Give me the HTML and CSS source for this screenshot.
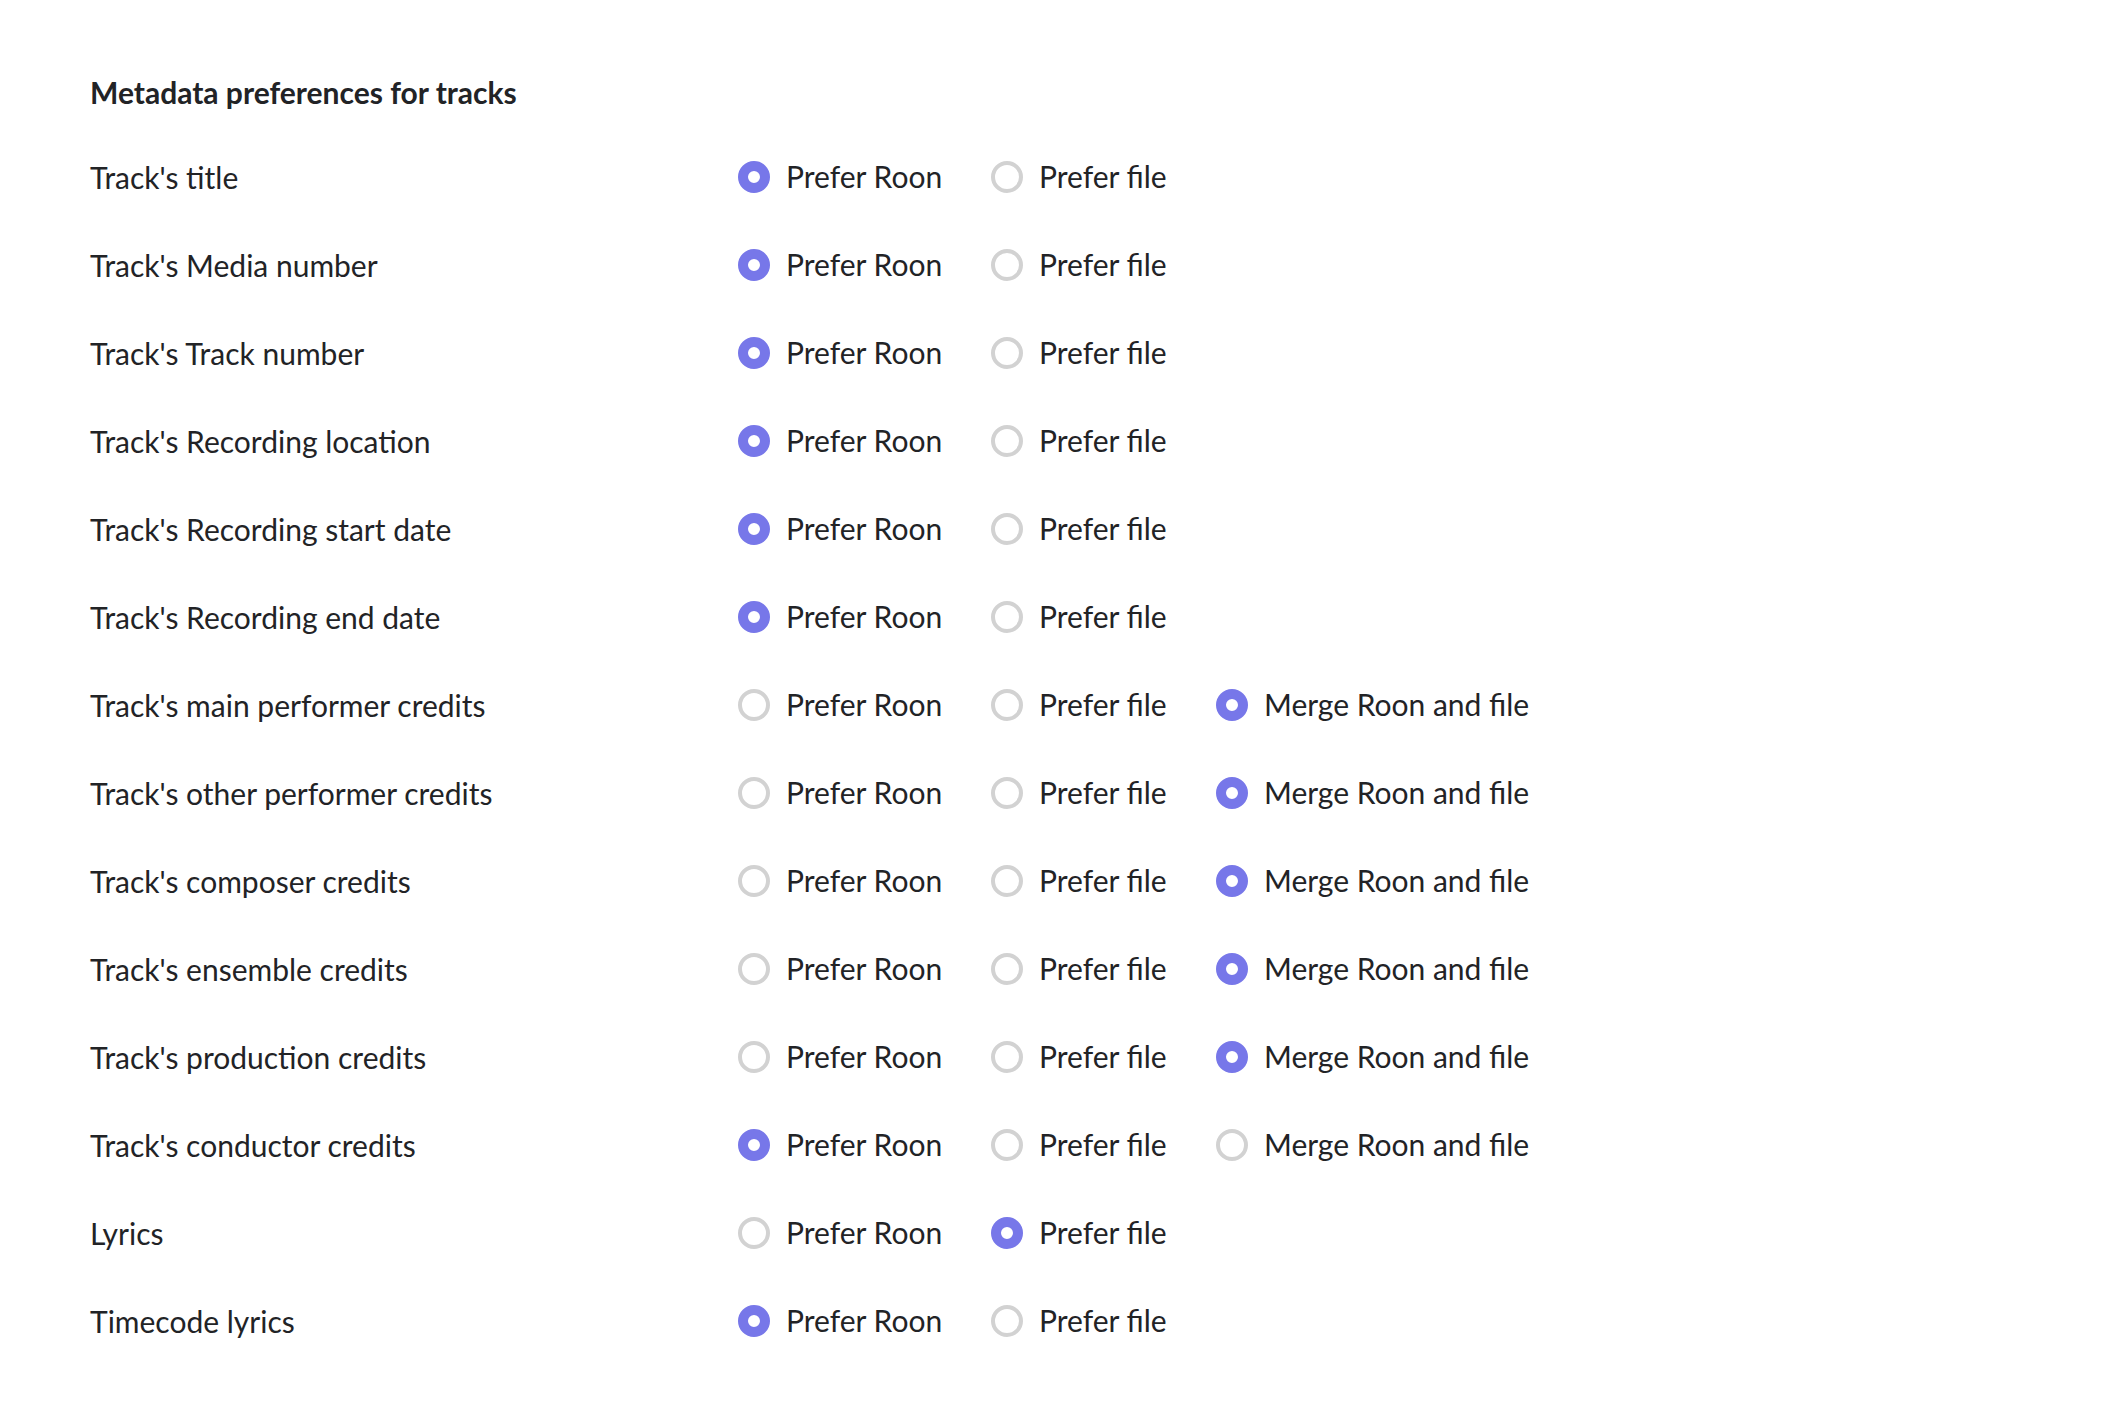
FILE: index.html
```html
<!DOCTYPE html>
<html lang="en">
<head>
<meta charset="utf-8">
<title>Metadata preferences for tracks</title>
<link rel="stylesheet" href="styles.css">
</head>
<body>
<main class="page">
  <h2 class="heading">Metadata preferences for tracks</h2>
  <div class="rows">
    <div class="row"><div class="label">Track's title</div><div class="options"><span class="opt"><span class="radio on"></span>Prefer Roon</span><span class="opt"><span class="radio"></span>Prefer file</span></div></div>
    <div class="row"><div class="label">Track's Media number</div><div class="options"><span class="opt"><span class="radio on"></span>Prefer Roon</span><span class="opt"><span class="radio"></span>Prefer file</span></div></div>
    <div class="row"><div class="label">Track's Track number</div><div class="options"><span class="opt"><span class="radio on"></span>Prefer Roon</span><span class="opt"><span class="radio"></span>Prefer file</span></div></div>
    <div class="row"><div class="label">Track's Recording location</div><div class="options"><span class="opt"><span class="radio on"></span>Prefer Roon</span><span class="opt"><span class="radio"></span>Prefer file</span></div></div>
    <div class="row"><div class="label">Track's Recording start date</div><div class="options"><span class="opt"><span class="radio on"></span>Prefer Roon</span><span class="opt"><span class="radio"></span>Prefer file</span></div></div>
    <div class="row"><div class="label">Track's Recording end date</div><div class="options"><span class="opt"><span class="radio on"></span>Prefer Roon</span><span class="opt"><span class="radio"></span>Prefer file</span></div></div>
    <div class="row"><div class="label">Track's main performer credits</div><div class="options"><span class="opt"><span class="radio"></span>Prefer Roon</span><span class="opt"><span class="radio"></span>Prefer file</span><span class="opt"><span class="radio on"></span>Merge Roon and file</span></div></div>
    <div class="row"><div class="label">Track's other performer credits</div><div class="options"><span class="opt"><span class="radio"></span>Prefer Roon</span><span class="opt"><span class="radio"></span>Prefer file</span><span class="opt"><span class="radio on"></span>Merge Roon and file</span></div></div>
    <div class="row"><div class="label">Track's composer credits</div><div class="options"><span class="opt"><span class="radio"></span>Prefer Roon</span><span class="opt"><span class="radio"></span>Prefer file</span><span class="opt"><span class="radio on"></span>Merge Roon and file</span></div></div>
    <div class="row"><div class="label">Track's ensemble credits</div><div class="options"><span class="opt"><span class="radio"></span>Prefer Roon</span><span class="opt"><span class="radio"></span>Prefer file</span><span class="opt"><span class="radio on"></span>Merge Roon and file</span></div></div>
    <div class="row"><div class="label">Track's production credits</div><div class="options"><span class="opt"><span class="radio"></span>Prefer Roon</span><span class="opt"><span class="radio"></span>Prefer file</span><span class="opt"><span class="radio on"></span>Merge Roon and file</span></div></div>
    <div class="row"><div class="label">Track's conductor credits</div><div class="options"><span class="opt"><span class="radio on"></span>Prefer Roon</span><span class="opt"><span class="radio"></span>Prefer file</span><span class="opt"><span class="radio"></span>Merge Roon and file</span></div></div>
    <div class="row"><div class="label">Lyrics</div><div class="options"><span class="opt"><span class="radio"></span>Prefer Roon</span><span class="opt"><span class="radio on"></span>Prefer file</span></div></div>
    <div class="row"><div class="label">Timecode lyrics</div><div class="options"><span class="opt"><span class="radio on"></span>Prefer Roon</span><span class="opt"><span class="radio"></span>Prefer file</span></div></div>
  </div>
</main>
</body>
</html>
```

FILE: styles.css
```css
html, body {
  margin: 0;
  padding: 0;
  background: #ffffff;
}

body {
  font-family: Lato, "Noto Sans", "Liberation Sans", sans-serif;
  color: #222326;
}

.page {
  padding: 72px 0 0 90px;
}

.heading {
  margin: 0 0 20px 0;
  font-size: 30px;
  line-height: 40px;
  font-weight: 700;
  color: #222326;
}

.rows {
  display: flex;
  flex-direction: column;
}

.row {
  display: flex;
  align-items: center;
  height: 88px;
}

.label {
  width: 648px;
  flex: none;
  font-size: 30px;
  line-height: 40px;
  padding-top: 2px;
}

.options {
  display: grid;
  grid-template-columns: 253px 225px auto;
  align-items: center;
}

.opt {
  display: flex;
  align-items: center;
  gap: 16px;
  font-size: 30px;
  line-height: 40px;
  white-space: nowrap;
}

.radio {
  box-sizing: border-box;
  width: 32px;
  height: 32px;
  border-radius: 50%;
  border: 4px solid #d2d2d2;
  background: #ffffff;
  flex: none;
  margin-top: 1px;
}

.radio.on {
  border: 10px solid #7777e9;
}
```
